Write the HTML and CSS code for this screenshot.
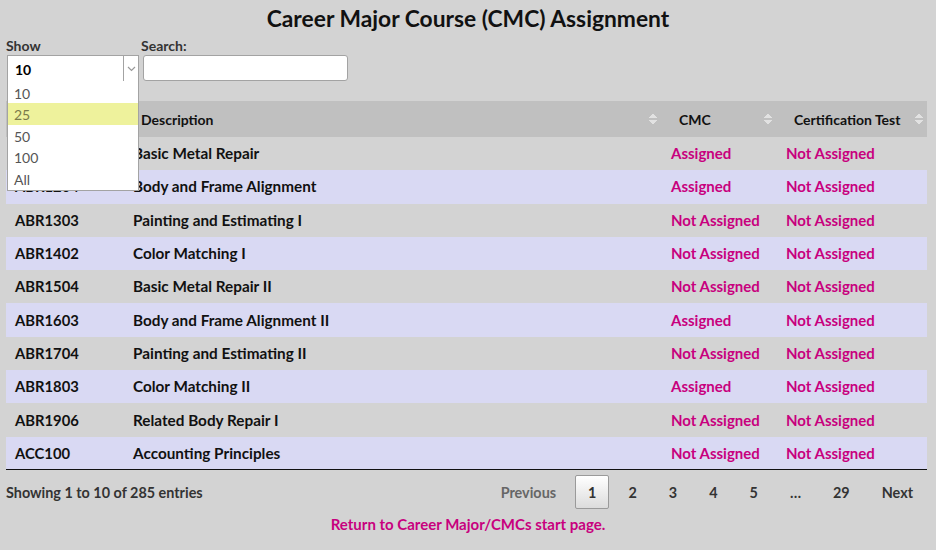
FILE: index.html
```html
<!DOCTYPE html>
<html>
<head>
<meta charset="utf-8">
<link rel="stylesheet" href="styles.css">
</head>
<body>
<h1 class="title">Career Major Course (CMC) Assignment</h1>
<div class="controls">
  <div class="length">
    <label class="lbl">Show</label>
    <div class="select">
      <span class="sel-val">10</span>
      <span class="sel-arrow"><svg width="9" height="6" viewBox="0 0 9 6"><path d="M1 1 L4.5 4.5 L8 1" fill="none" stroke="#999" stroke-width="1.2"/></svg></span>
    </div>
    <ul class="menu">
      <li>10</li>
      <li class="hl">25</li>
      <li>50</li>
      <li>100</li>
      <li>All</li>
    </ul>
  </div>
  <div class="search">
    <label class="lbl">Search:</label>
    <div class="input"></div>
  </div>
</div>
<table class="grid">
  <colgroup><col class="c1"><col class="c2"><col class="c3"><col class="c4"></colgroup>
  <thead>
    <tr><th></th><th class="sort">Description</th><th class="sort">CMC</th><th class="sort">Certification Test</th></tr>
  </thead>
  <tbody>
    <tr><td>ABR1104</td><td>Basic Metal Repair</td><td class="pk">Assigned</td><td class="pk">Not Assigned</td></tr>
    <tr class="alt"><td>ABR1204</td><td>Body and Frame Alignment</td><td class="pk">Assigned</td><td class="pk">Not Assigned</td></tr>
    <tr><td>ABR1303</td><td>Painting and Estimating I</td><td class="pk">Not Assigned</td><td class="pk">Not Assigned</td></tr>
    <tr class="alt"><td>ABR1402</td><td>Color Matching I</td><td class="pk">Not Assigned</td><td class="pk">Not Assigned</td></tr>
    <tr><td>ABR1504</td><td>Basic Metal Repair II</td><td class="pk">Not Assigned</td><td class="pk">Not Assigned</td></tr>
    <tr class="alt"><td>ABR1603</td><td>Body and Frame Alignment II</td><td class="pk">Assigned</td><td class="pk">Not Assigned</td></tr>
    <tr><td>ABR1704</td><td>Painting and Estimating II</td><td class="pk">Not Assigned</td><td class="pk">Not Assigned</td></tr>
    <tr class="alt"><td>ABR1803</td><td>Color Matching II</td><td class="pk">Assigned</td><td class="pk">Not Assigned</td></tr>
    <tr><td>ABR1906</td><td>Related Body Repair I</td><td class="pk">Not Assigned</td><td class="pk">Not Assigned</td></tr>
    <tr class="alt"><td>ACC100</td><td>Accounting Principles</td><td class="pk">Not Assigned</td><td class="pk">Not Assigned</td></tr>
  </tbody>
</table>
<div class="foot">
  <div class="info">Showing 1 to 10 of 285 entries</div>
  <div class="pager">
    <span class="pb dis">Previous</span>
    <span class="pb cur">1</span>
    <span class="pb">2</span>
    <span class="pb">3</span>
    <span class="pb">4</span>
    <span class="pb">5</span>
    <span class="pb ell">…</span>
    <span class="pb">29</span>
    <span class="pb">Next</span>
  </div>
</div>
<div class="ret"><a href="#">Return to Career Major/CMCs start page.</a></div>
</body>
</html>
```
FILE: styles.css
```css
html, body {
  margin: 0;
  padding: 0;
  background: #d3d3d3;
}
body {
  padding: 0 6px;
  font-family: Lato, "Open Sans", sans-serif;
  font-weight: 700;
  color: #111;
  width: 924px;
}
.title {
  margin: 0;
  padding-top: 6px;
  font-size: 22.8px;
  line-height: 24px;
  text-align: center;
  color: #111;
}
.controls {
  display: flex;
  margin-top: 8px;
  height: 63px;
}
.lbl {
  display: block;
  font-size: 14px;
  line-height: 16px;
  color: #333;
  height: 17px;
}
.length {
  position: relative;
  width: 133px;
}
.select {
  margin-left: 1px;
  width: 130px;
  height: 25px;
  background: #fff;
  border: 1px solid #a3a3a3;
  display: flex;
  align-items: center;
}
.sel-val {
  flex: 1;
  padding-left: 7px;
  font-size: 14px;
  color: #000;
  padding-top: 2px;
}
.sel-arrow {
  width: 14px;
  height: 100%;
  border-left: 1px solid #a3a3a3;
  display: flex;
  align-items: center;
  justify-content: center;
}
.menu {
  position: absolute;
  left: 1px;
  top: 43px;
  width: 130px;
  margin: 0;
  padding: 1px 0 1px;
  list-style: none;
  background: #fff;
  border: 1px solid #a3a3a3;
  border-top: none;
  z-index: 5;
}
.menu li {
  height: 21.4px;
  line-height: 23px;
  padding-left: 6px;
  font-size: 14px;
  font-weight: 400;
  color: #555;
}
.menu li.hl {
  background: #eef29c;
  color: #7a7a4a;
}
.search {
  margin-left: 2px;
}
.input {
  margin-left: 2px;
  width: 203px;
  height: 24px;
  background: #fff;
  border: 1px solid #a3a3a3;
  border-radius: 3px;
}
.grid {
  width: 921px;
  border-collapse: collapse;
  table-layout: fixed;
  border-bottom: 1px solid #111;
}
.c1 { width: 117px; }
.c2 { width: 538px; }
.c3 { width: 115px; }
.c4 { width: 151px; }
.grid thead tr {
  background: #c0c0c0;
  height: 36px;
}
.grid th {
  text-align: left;
  font-size: 14px;
  padding: 0 18px;
  position: relative;
  color: #111;
}
.grid th.sort::after {
  content: "";
  position: absolute;
  right: 4px;
  top: 11px;
  width: 8px;
  height: 15px;
  background:
    linear-gradient(to bottom right, transparent 50%, #e2e2e2 50%) left 1px / 4px 5px no-repeat,
    linear-gradient(to bottom left, transparent 50%, #e2e2e2 50%) right 1px / 4px 5px no-repeat,
    linear-gradient(to top right, transparent 50%, #e2e2e2 50%) left 8px / 4px 5px no-repeat,
    linear-gradient(to top left, transparent 50%, #e2e2e2 50%) right 8px / 4px 5px no-repeat;
}
.grid tbody tr {
  height: 33.3px;
}
.grid tbody tr.alt {
  background: #d9d9f3;
}
.grid td {
  padding: 0 10px 1px;
  font-size: 15.3px;
  white-space: nowrap;
  color: #111;
}
.grid td:first-child {
  padding-left: 9px;
  font-size: 14.8px;
}
.grid td.pk {
  color: #c8007e;
  font-size: 15px;
}
.foot {
  display: flex;
  justify-content: space-between;
  align-items: center;
  margin-top: 5px;
}
.info {
  font-size: 14.4px;
  color: #333;
}
.pager {
  display: flex;
  align-items: center;
  gap: 6px;
  margin-right: 4px;
}
.pb {
  box-sizing: border-box;
  height: 34px;
  line-height: 33px;
  padding: 0 12px;
  font-size: 14.4px;
  color: #333;
  border: 1px solid transparent;
  border-radius: 2px;
}
.pb.dis {
  color: #666;
}
.pb.cur {
  border-color: #9a9a9a;
  background: linear-gradient(to bottom, #fff 0%, #dcdcdc 100%);
  color: #333;
}
.pb.ell {
  padding: 0 12px;
}
.ret {
  text-align: center;
  margin-top: 5px;
}
.ret a {
  color: #c8007e;
  text-decoration: none;
  font-size: 15px;
}
```
